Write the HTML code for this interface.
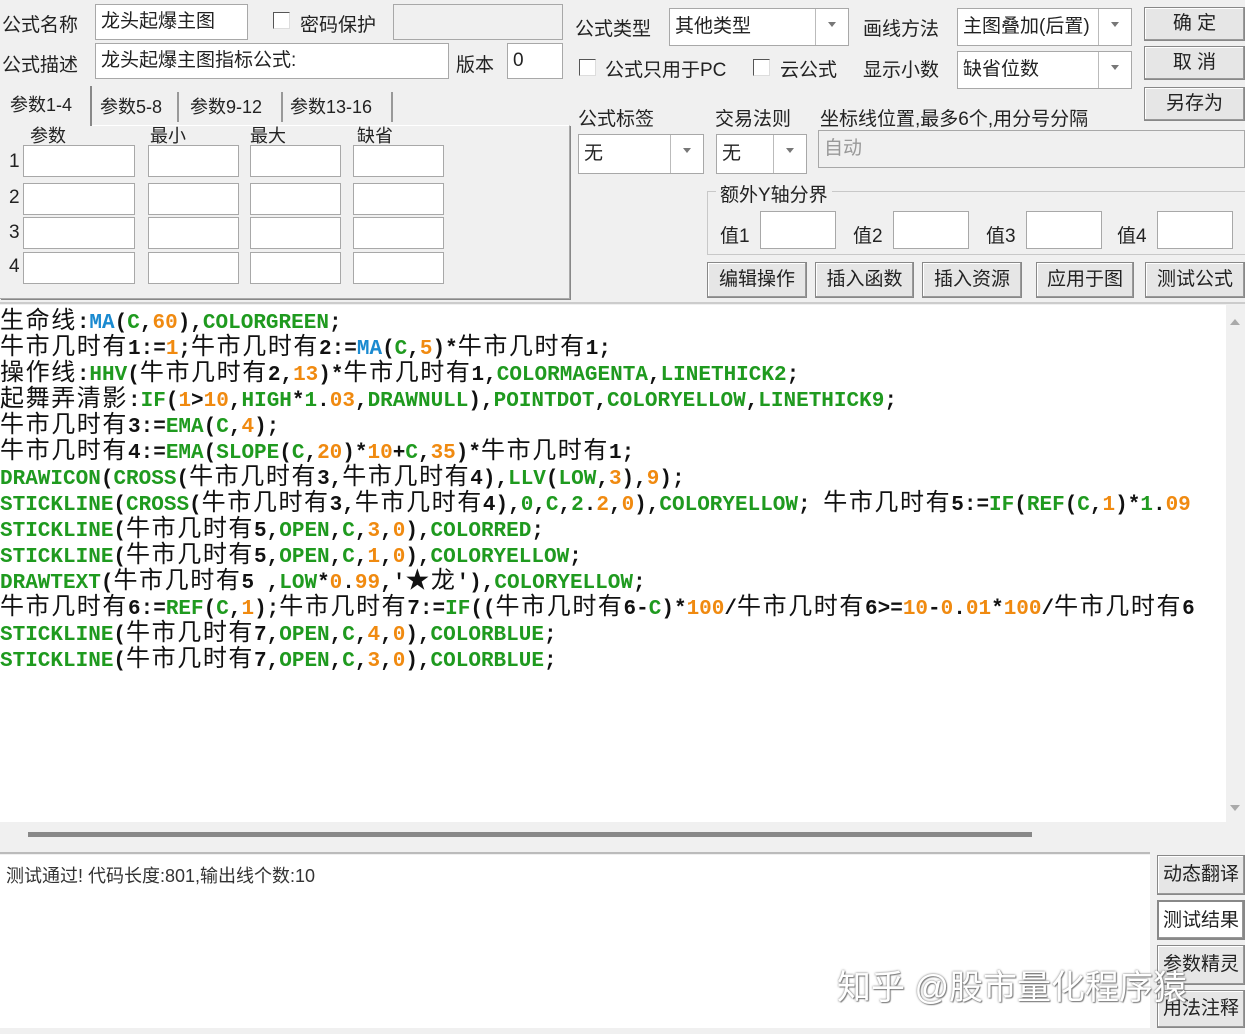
<!DOCTYPE html>
<html><head><meta charset="utf-8"><style>
body{margin:0;width:1245px;height:1034px;background:#f0f0f0;position:relative;overflow:hidden;font-family:"Liberation Sans","Noto Sans CJK SC",sans-serif;font-size:19px;color:#222}
.a{position:absolute}
.in{position:absolute;background:#fff;border:1px solid #a8a8a8;box-sizing:border-box;font-size:19px;padding-left:5px;line-height:30px}
.dis{background:#f0f0f0}
.btn{position:absolute;background:#e6e6e6;border:1px solid #888;box-sizing:border-box;text-align:center;font-size:19px;box-shadow:inset -1px -1px 0 #999,inset 1px 1px 0 #fff}
.cb{position:absolute;width:15px;height:15px;background:#fff;border:1px solid #555;border-right-color:#ddd;border-bottom-color:#ddd}
.dd{position:absolute;right:0;top:0;bottom:0;width:32px;border-left:1px solid #bbb}
.dd:after{content:"";position:absolute;left:12px;top:13px;border:4px solid transparent;border-top:5px solid #777}
#code{position:absolute;left:0;top:305px;width:1226px;height:517px;background:#fff;overflow:hidden}
.l{height:26px;line-height:26px;white-space:pre;font-family:"Liberation Mono","Noto Sans CJK SC",monospace;font-weight:bold;font-size:21px;color:#111}
.l i{font-style:normal;font-weight:normal;font-family:"Noto Sans CJK SC",sans-serif;font-size:24px;letter-spacing:1.6px}
.g{color:#1f9a1f}.b{color:#1a8ad0}.o{color:#f08a10}
.p1{width:112px!important}.p2{width:91px!important}
</style></head><body>
<div class="a" style="left:2px;top:10px">公式名称</div>
<div class="in" style="left:95px;top:4px;width:153px;height:36px;line-height:34px">龙头起爆主图</div>
<div class="cb" style="left:273px;top:12px"></div>
<div class="a" style="left:300px;top:10px">密码保护</div>
<div class="in dis" style="left:393px;top:4px;width:170px;height:36px"></div>
<div class="a" style="left:2px;top:50px">公式描述</div>
<div class="in" style="left:95px;top:43px;width:354px;height:36px;line-height:34px">龙头起爆主图指标公式:</div>
<div class="a" style="left:456px;top:50px">版本</div>
<div class="in" style="left:507px;top:43px;width:56px;height:36px;line-height:34px">0</div>

<div class="a" style="left:575px;top:14px">公式类型</div>
<div class="in" style="left:669px;top:8px;width:180px;height:38px;line-height:36px">其他类型<div class="dd"></div></div>
<div class="a" style="left:863px;top:14px">画线方法</div>
<div class="in" style="left:957px;top:8px;width:175px;height:38px;line-height:36px">主图叠加(后置)<div class="dd"></div></div>
<div class="btn" style="left:1144px;top:7px;width:101px;height:34px;line-height:32px">确 定</div>
<div class="cb" style="left:579px;top:59px"></div>
<div class="a" style="left:605px;top:55px">公式只用于PC</div>
<div class="cb" style="left:753px;top:59px"></div>
<div class="a" style="left:780px;top:55px">云公式</div>
<div class="a" style="left:863px;top:55px">显示小数</div>
<div class="in" style="left:957px;top:51px;width:175px;height:38px;line-height:36px">缺省位数<div class="dd"></div></div>
<div class="btn" style="left:1144px;top:46px;width:101px;height:34px;line-height:32px">取 消</div>
<div class="btn" style="left:1144px;top:87px;width:101px;height:34px;line-height:32px">另存为</div>

<div class="a" style="left:0;top:125px;width:569px;height:172px;border:1px solid #aaa;border-top-color:#fff;border-left:none;box-shadow:1px 1px 0 #888"></div>
<div class="a" style="left:0;top:86px;width:80px;height:40px;border-right:2px solid #888;background:#f0f0f0;padding-left:10px;line-height:38px;font-size:18px">参数1-4</div>
<div class="a" style="left:100px;top:92px;line-height:30px;font-size:18px">参数5-8</div>
<div class="a" style="left:177px;top:92px;width:2px;height:30px;background:#999"></div>
<div class="a" style="left:190px;top:92px;line-height:30px;font-size:18px">参数9-12</div>
<div class="a" style="left:281px;top:92px;width:2px;height:30px;background:#999"></div>
<div class="a" style="left:290px;top:92px;line-height:30px;font-size:18px">参数13-16</div>
<div class="a" style="left:391px;top:92px;width:2px;height:30px;background:#999"></div>
<div class="a" style="left:30px;top:122px;font-size:18px">参数</div>
<div class="a" style="left:150px;top:122px;font-size:18px">最小</div>
<div class="a" style="left:250px;top:122px;font-size:18px">最大</div>
<div class="a" style="left:357px;top:122px;font-size:18px">缺省</div>
<div class="a" style="left:9px;top:151px">1</div><div class="a" style="left:9px;top:187px">2</div><div class="a" style="left:9px;top:222px">3</div><div class="a" style="left:9px;top:256px">4</div>
<div class="in p1" style="left:23px;top:145px;height:32px"></div><div class="in p2" style="left:148px;top:145px;height:32px"></div><div class="in p2" style="left:250px;top:145px;height:32px"></div><div class="in p2" style="left:353px;top:145px;height:32px"></div>
<div class="in p1" style="left:23px;top:183px;height:32px"></div><div class="in p2" style="left:148px;top:183px;height:32px"></div><div class="in p2" style="left:250px;top:183px;height:32px"></div><div class="in p2" style="left:353px;top:183px;height:32px"></div>
<div class="in p1" style="left:23px;top:217px;height:32px"></div><div class="in p2" style="left:148px;top:217px;height:32px"></div><div class="in p2" style="left:250px;top:217px;height:32px"></div><div class="in p2" style="left:353px;top:217px;height:32px"></div>
<div class="in p1" style="left:23px;top:252px;height:32px"></div><div class="in p2" style="left:148px;top:252px;height:32px"></div><div class="in p2" style="left:250px;top:252px;height:32px"></div><div class="in p2" style="left:353px;top:252px;height:32px"></div>

<div class="a" style="left:578px;top:104px">公式标签</div>
<div class="a" style="left:715px;top:104px">交易法则</div>
<div class="a" style="left:820px;top:104px">坐标线位置,最多6个,用分号分隔</div>
<div class="in" style="left:578px;top:134px;width:126px;height:40px;line-height:38px">无<div class="dd"></div></div>
<div class="in" style="left:716px;top:134px;width:91px;height:40px;line-height:38px">无<div class="dd"></div></div>
<div class="in dis" style="left:818px;top:130px;width:427px;height:38px;line-height:36px;color:#999">自动</div>
<div class="a" style="left:707px;top:191px;width:538px;height:62px;border:1px solid #c8c8c8"></div>
<div class="a" style="left:716px;top:180px;background:#f0f0f0;padding:0 4px">额外Y轴分界</div>
<div class="a" style="left:720px;top:221px">值1</div><div class="in" style="left:760px;top:211px;width:76px;height:38px"></div>
<div class="a" style="left:853px;top:221px">值2</div><div class="in" style="left:893px;top:211px;width:76px;height:38px"></div>
<div class="a" style="left:986px;top:221px">值3</div><div class="in" style="left:1026px;top:211px;width:76px;height:38px"></div>
<div class="a" style="left:1117px;top:221px">值4</div><div class="in" style="left:1157px;top:211px;width:76px;height:38px"></div>
<div class="btn" style="left:707px;top:262px;width:100px;height:36px;line-height:34px">编辑操作</div>
<div class="btn" style="left:815px;top:262px;width:99px;height:36px;line-height:34px">插入函数</div>
<div class="btn" style="left:922px;top:262px;width:100px;height:36px;line-height:34px">插入资源</div>
<div class="btn" style="left:1036px;top:262px;width:98px;height:36px;line-height:34px">应用于图</div>
<div class="btn" style="left:1145px;top:262px;width:100px;height:36px;line-height:34px">测试公式</div>

<div class="a" style="left:0;top:302px;width:1245px;height:2px;background:#ccc"></div>
<div id="code">
<div class="l"><i>生命线</i>:<span class="b">MA</span>(<span class="g">C</span>,<span class="o">60</span>),<span class="g">COLORGREEN</span>;</div>
<div class="l"><i>牛市几时有</i>1:=<span class="o">1</span>;<i>牛市几时有</i>2:=<span class="b">MA</span>(<span class="g">C</span>,<span class="o">5</span>)*<i>牛市几时有</i>1;</div>
<div class="l"><i>操作线</i>:<span class="g">HHV</span>(<i>牛市几时有</i>2,<span class="o">13</span>)*<i>牛市几时有</i>1,<span class="g">COLORMAGENTA</span>,<span class="g">LINETHICK2</span>;</div>
<div class="l"><i>起舞弄清影</i>:<span class="g">IF</span>(<span class="o">1</span>&gt;<span class="o">10</span>,<span class="g">HIGH</span>*<span class="g">1</span>.<span class="o">03</span>,<span class="g">DRAWNULL</span>),<span class="g">POINTDOT</span>,<span class="g">COLORYELLOW</span>,<span class="g">LINETHICK9</span>;</div>
<div class="l"><i>牛市几时有</i>3:=<span class="g">EMA</span>(<span class="g">C</span>,<span class="o">4</span>);</div>
<div class="l"><i>牛市几时有</i>4:=<span class="g">EMA</span>(<span class="g">SLOPE</span>(<span class="g">C</span>,<span class="o">20</span>)*<span class="o">10</span>+<span class="g">C</span>,<span class="o">35</span>)*<i>牛市几时有</i>1;</div>
<div class="l"><span class="g">DRAWICON</span>(<span class="g">CROSS</span>(<i>牛市几时有</i>3,<i>牛市几时有</i>4),<span class="g">LLV</span>(<span class="g">LOW</span>,<span class="o">3</span>),<span class="o">9</span>);</div>
<div class="l"><span class="g">STICKLINE</span>(<span class="g">CROSS</span>(<i>牛市几时有</i>3,<i>牛市几时有</i>4),<span class="g">0</span>,<span class="g">C</span>,<span class="g">2</span>.<span class="o">2</span>,<span class="o">0</span>),<span class="g">COLORYELLOW</span>; <i>牛市几时有</i>5:=<span class="g">IF</span>(<span class="g">REF</span>(<span class="g">C</span>,<span class="o">1</span>)*<span class="g">1</span>.<span class="o">09</span></div>
<div class="l"><span class="g">STICKLINE</span>(<i>牛市几时有</i>5,<span class="g">OPEN</span>,<span class="g">C</span>,<span class="o">3</span>,<span class="o">0</span>),<span class="g">COLORRED</span>;</div>
<div class="l"><span class="g">STICKLINE</span>(<i>牛市几时有</i>5,<span class="g">OPEN</span>,<span class="g">C</span>,<span class="o">1</span>,<span class="o">0</span>),<span class="g">COLORYELLOW</span>;</div>
<div class="l"><span class="g">DRAWTEXT</span>(<i>牛市几时有</i>5 ,<span class="g">LOW</span>*<span class="o">0</span>.<span class="o">99</span>,'<i>★龙</i>'),<span class="g">COLORYELLOW</span>;</div>
<div class="l"><i>牛市几时有</i>6:=<span class="g">REF</span>(<span class="g">C</span>,<span class="o">1</span>);<i>牛市几时有</i>7:=<span class="g">IF</span>((<i>牛市几时有</i>6-<span class="g">C</span>)*<span class="o">100</span>/<i>牛市几时有</i>6&gt;=<span class="o">10</span>-<span class="o">0</span>.<span class="o">01</span>*<span class="o">100</span>/<i>牛市几时有</i>6</div>
<div class="l"><span class="g">STICKLINE</span>(<i>牛市几时有</i>7,<span class="g">OPEN</span>,<span class="g">C</span>,<span class="o">4</span>,<span class="o">0</span>),<span class="g">COLORBLUE</span>;</div>
<div class="l"><span class="g">STICKLINE</span>(<i>牛市几时有</i>7,<span class="g">OPEN</span>,<span class="g">C</span>,<span class="o">3</span>,<span class="o">0</span>),<span class="g">COLORBLUE</span>;</div>
</div>
<div class="a" style="left:1226px;top:305px;width:19px;height:517px;background:#f0f0f0"></div>
<div class="a" style="left:1230px;top:314px;border:5px solid transparent;border-bottom:6px solid #aaa"></div>
<div class="a" style="left:1230px;top:805px;border:5px solid transparent;border-top:6px solid #aaa"></div>
<div class="a" style="left:28px;top:832px;width:1004px;height:5px;background:#888"></div>
<div class="a" style="left:0;top:852px;width:1150px;height:2px;background:#bbb"></div>
<div class="a" style="left:0;top:855px;width:1150px;height:173px;background:#fff"></div>
<div class="a" style="left:6px;top:862px;font-size:18px;color:#333">测试通过! 代码长度:801,输出线个数:10</div>
<div class="btn" style="left:1157px;top:855px;width:88px;height:40px;line-height:38px">动态翻译</div>
<div class="btn" style="left:1157px;top:900px;width:88px;height:40px;line-height:38px;background:#fff;border:2px solid #888">测试结果</div>
<div class="btn" style="left:1157px;top:945px;width:88px;height:40px;line-height:38px">参数精灵</div>
<div class="btn" style="left:1157px;top:990px;width:88px;height:38px;line-height:36px">用法注释</div>
<div class="a" style="left:837px;top:960px;font-size:34px;color:#fff;text-shadow:0 0 2px #666,1px 1px 1px #888">知乎 @股市量化程序猿</div>
</body></html>
